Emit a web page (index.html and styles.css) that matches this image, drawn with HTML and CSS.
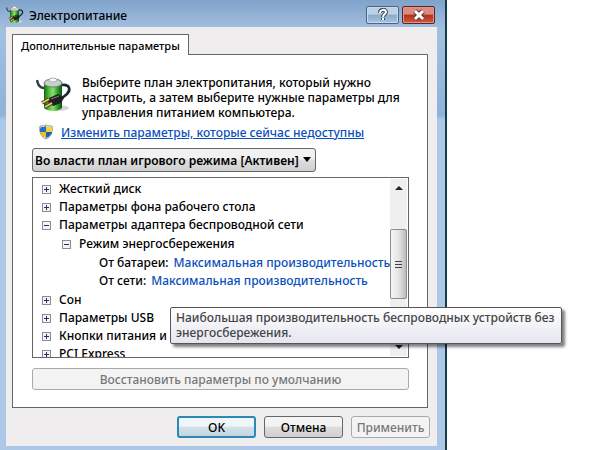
FILE: index.html
```html
<!DOCTYPE html>
<html lang="ru">
<head>
    <meta charset="UTF-8">
    <meta name="viewport" content="width=device-width, initial-scale=1.0">
    <title>Электропитание</title>
    <link rel="stylesheet" href="styles.css">
</head>
<body>
    <svg width="0" height="0" class="defs" aria-hidden="true">
        <defs>
            <linearGradient id="green">
                <stop offset="0" stop-color="#136b12"/>
                <stop offset="0.3" stop-color="#55c63f"/>
                <stop offset="0.5" stop-color="#8be070"/>
                <stop offset="0.75" stop-color="#2f9f27"/>
                <stop offset="1" stop-color="#0b5210"/>
            </linearGradient>
            <symbol id="battery" viewBox="0 0 36 36">
                <ellipse cx="21" cy="31" rx="12" ry="3" fill="#d5d5d5"/>
                <path d="M8 6v24c0 5 18 5 18 0V6z" fill="url(#green)"/>
                <ellipse cx="17" cy="6" rx="9" ry="4" fill="#c9ced0" stroke="#69806b"/>
                <ellipse cx="17" cy="3" rx="4" ry="2" fill="#f5f5f5" stroke="#999" stroke-width=".7"/>
                <path d="M1 3c1 6 3 8 7 8" fill="none" stroke="#343e49" stroke-width="2.4"/>
                <path d="M26 8c8-1 9 5 5 9l-5 4" fill="none" stroke="#1c2530" stroke-width="2.6"/>
                <path d="M13 21l9-4 6 4-3 5-8 3-5-4z" fill="#202020"/>
                <path d="M15 22l8-3" stroke="#777" stroke-width="1.2"/>
                <path d="M13 22l-7 4M16 26l-7 4" stroke="#493713" stroke-width="3.6"/>
                <path d="M13 22l-7 4M16 26l-7 4" stroke="#efc675" stroke-width="1.8"/>
            </symbol>
        </defs>
    </svg>
    <div class="window">
        <header class="titlebar">
            <svg class="title-icon"><use href="#battery"/></svg>
            <h1>Электропитание</h1>
            <button type="button" class="caption" aria-label="Справка">
                <svg width="14" height="14" viewBox="0 0 14 14"><path d="M4 5c0-4 6-4 6-1 0 2-3 2-3 5M7 10v2" fill="none" stroke="#39465a" stroke-width="4"/><path d="M4 5c0-4 6-4 6-1 0 2-3 2-3 5M7 10v2" fill="none" stroke="#fff" stroke-width="2"/></svg>
            </button>
            <button type="button" class="caption close" aria-label="Закрыть">
                <svg width="14" height="12" viewBox="0 0 14 12"><path d="M3 2l8 8M11 2l-8 8" stroke="#5c3535" stroke-width="5"/><path d="M3 2l8 8M11 2l-8 8" stroke="#fff" stroke-width="3"/></svg>
            </button>
        </header>
        <main class="client">
            <button type="button" class="tab">Дополнительные параметры</button>
            <section class="panel">
                <div class="intro">
                    <svg class="intro-icon"><use href="#battery"/></svg>
                    <p>Выберите план электропитания, который нужно настроить, а затем выберите нужные параметры для управления питанием компьютера.</p>
                </div>
                <div class="unlock">
                    <svg width="16" height="16" viewBox="0 0 16 16" aria-hidden="true">
                        <path d="M8 1c2 1 4 1 6 1 1 6-1 11-6 13C3 13 1 8 2 2c2 0 4 0 6-1z" fill="#fff" stroke="#8c949c"/>
                        <path d="M8 2v6H2c-.4-2 0-4 1-5 2 0 3 0 5-1z" fill="#246fc4"/>
                        <path d="M8 2v6h6c.4-2 0-4-1-5-2 0-3 0-5-1z" fill="#f8d03c"/>
                        <path d="M8 8v6C5 13 3 11 2 8z" fill="#f3bd20"/>
                        <path d="M8 8v6c3-1 5-3 6-6z" fill="#1e5eb4"/>
                    </svg>
                    <a href="#">Изменить параметры, которые сейчас недоступны</a>
                </div>
                <div class="plan">
                    <select aria-label="План электропитания">
                        <option>Во власти план игрового режима [Активен]</option>
                    </select>
                </div>
                <div class="tree-box">
                    <ul class="tree">
                        <li><div class="row"><button type="button" class="toggle plus" aria-label="Развернуть"></button>Жесткий диск</div></li>
                        <li><div class="row"><button type="button" class="toggle plus" aria-label="Развернуть"></button>Параметры фона рабочего стола</div></li>
                        <li>
                            <div class="row"><button type="button" class="toggle" aria-label="Свернуть"></button>Параметры адаптера беспроводной сети</div>
                            <ul>
                                <li>
                                    <div class="row"><button type="button" class="toggle" aria-label="Свернуть"></button>Режим энергосбережения</div>
                                    <ul class="values">
                                        <li class="row">От батареи: <a href="#">Максимальная производительность</a></li>
                                        <li class="row">От сети: <a href="#">Максимальная производительность</a></li>
                                    </ul>
                                </li>
                            </ul>
                        </li>
                        <li><div class="row"><button type="button" class="toggle plus" aria-label="Развернуть"></button>Сон</div></li>
                        <li><div class="row"><button type="button" class="toggle plus" aria-label="Развернуть"></button>Параметры USB</div></li>
                        <li><div class="row"><button type="button" class="toggle plus" aria-label="Развернуть"></button>Кнопки питания и</div></li>
                        <li><div class="row"><button type="button" class="toggle plus" aria-label="Развернуть"></button>PCI Express</div></li>
                    </ul>
                    <div class="scrollbar">
                        <button type="button" class="arrow up" aria-label="Вверх"></button>
                        <div class="track"><div class="thumb"></div></div>
                        <button type="button" class="arrow down" aria-label="Вниз"></button>
                    </div>
                    <div class="tooltip" role="tooltip">Наибольшая производительность беспроводных устройств без энергосбережения.</div>
                </div>
                <button type="button" class="btn restore" disabled>Восстановить параметры по умолчанию</button>
            </section>
            <footer class="actions">
                <button type="button" class="btn default">OK</button>
                <button type="button" class="btn">Отмена</button>
                <button type="button" class="btn" disabled>Применить</button>
            </footer>
        </main>
    </div>
</body>
</html>
```
FILE: styles.css
```css
* {
    box-sizing: border-box;
}

body {
    margin: 0;
    background-color: #fff;
    color: #000;
    font-family: "Noto Sans", "Open Sans", sans-serif;
    font-size: 12px;
    font-weight: 500;
    line-height: 15px;
}

button, select {
    font: inherit;
    color: inherit;
    margin: 0;
    padding: 0;
}

ul {
    list-style: none;
    margin: 0;
    padding: 0;
}

a {
    color: #0a50bd;
}

.defs {
    display: block;
    height: 0;
}

.window {
    width: calc(100% - 153px);
    min-height: 100vh;
    padding: 0 8px 4px 6px;
    border-right: 2px solid #123b4c;
    background: linear-gradient(#80a3cb, #a3c0e0 30px, #8fb2d9 115px, #acc8e6 120px, #acc8e6);
    display: flex;
    flex-direction: column;
}

/* title bar */
.titlebar {
    height: 27px;
    display: flex;
    align-items: center;
    gap: 3px;
    padding-right: 2px;
    padding-bottom: 1px;
}

.titlebar h1 {
    flex: 1;
    margin: 0 0 0 2px;
    padding-top: 4px;
    font-size: 12px;
    font-weight: 500;
}

.title-icon {
    width: 18px;
    height: 18px;
    margin-top: 3px;
}

.caption {
    width: 33px;
    height: 18px;
    margin-top: 4px;
    border: 1px solid #4d6480;
    border-radius: 2px;
    background: linear-gradient(#bdd0e6 45%, #8ba9cb 50%, #a9c4e0);
    box-shadow: inset 0 0 0 1px #c8d9ea;
    display: flex;
    align-items: center;
    justify-content: center;
}

.close {
    border-color: #5b2526;
    background: linear-gradient(#d98c7f 45%, #b5301c 50%, #cf5a3c);
    box-shadow: inset 0 0 0 1px #dd9688;
}

/* client area */
.client {
    flex: 1;
    padding: 7px 9px 8px 6px;
    background-color: #efedee;
    display: flex;
    flex-direction: column;
}

.tab {
    align-self: flex-start;
    height: 21px;
    padding: 0 8px;
    border: 1px solid #666;
    border-bottom: 0;
    background-color: #fff;
    font-size: 11px;
    z-index: 1;
    margin-bottom: -1px;
}

.panel {
    padding: 20px 18px 17px 19px;
    border: 1px solid #666;
    background-color: #fff;
    display: flex;
    flex-direction: column;
}

.intro {
    display: flex;
    gap: 10px;
    padding-left: 4px;
}

.intro-icon {
    flex: none;
    width: 36px;
    height: 36px;
    margin-top: 2px;
}

.intro p {
    margin: 0;
}

.unlock {
    display: flex;
    align-items: center;
    gap: 7px;
    height: 16px;
    margin-top: 4px;
    padding-left: 6px;
}

.plan {
    position: relative;
    align-self: flex-start;
    margin-top: 8px;
}

.plan::after {
    content: "";
    position: absolute;
    right: 5px;
    top: 9px;
    border: 4px solid transparent;
    border-top: 5px solid #000;
    border-bottom: 0;
    pointer-events: none;
}

.plan select {
    display: block;
    appearance: none;
    width: 284px;
    height: 24px;
    padding: 0 2px;
    border: 1px solid #666;
    border-radius: 3px;
    background: linear-gradient(#f1f1f1 45%, #dedede 50%, #cfcfcf);
    font-weight: 600;
}

/* settings tree */
.tree-box {
    position: relative;
    margin-top: 5px;
    border: 1px solid #666;
    display: flex;
}

.tree {
    flex: 1;
    height: 179px;
    padding: 1px 0 0 9px;
    overflow: hidden;
}

.tree ul {
    padding: 1px 0 0 20px;
}

.tree .values {
    padding: 1px 0 1px 37px;
}

.row {
    height: 18px;
    display: flex;
    align-items: center;
    gap: 8px;
    white-space: nowrap;
}

.values .row {
    gap: 5px;
}

.row a {
    text-decoration: none;
}

.toggle {
    width: 9px;
    height: 9px;
    margin-top: 2px;
    border: 1px solid #8b8b94;
    background: linear-gradient(#27305f, #27305f) center / 5px 1px no-repeat, #f3f3f8;
}

.plus {
    background: linear-gradient(#27305f, #27305f) center / 5px 1px no-repeat,
        linear-gradient(#27305f, #27305f) center / 1px 5px no-repeat, #f3f3f8;
}

.scrollbar {
    width: 17px;
    margin: 1px 1px 1px 0;
    background-color: #efefef;
    display: flex;
    flex-direction: column;
}

.arrow {
    height: 18px;
    border: 0;
    background: none;
    display: flex;
    align-items: center;
    justify-content: center;
}

.arrow::before {
    content: "";
    border: 4px solid transparent;
}

.up::before {
    border-top: 0;
    border-bottom: 4px solid #222;
}

.down::before {
    border-bottom: 0;
    border-top: 4px solid #222;
}

.track {
    flex: 1;
    padding-top: 32px;
}

.thumb {
    height: 70px;
    border: 1px solid #8d8d8d;
    border-radius: 2px;
    background: linear-gradient(#444, #444) center 31px / 7px 1px no-repeat,
        linear-gradient(#444, #444) center 34px / 7px 1px no-repeat,
        linear-gradient(#444, #444) center 37px / 7px 1px no-repeat,
        linear-gradient(to right, #f6f6f6, #e4e4e4 50%, #bbb);
}

.tooltip {
    position: absolute;
    left: 137px;
    top: 129px;
    width: 392px;
    padding: 2px 5px 3px;
    border: 1px solid #555;
    border-radius: 2px;
    background: linear-gradient(#fff, #e4e5f0);
    box-shadow: 3px 3px 3px rgba(0, 0, 0, 0.5);
    color: #444;
}

/* buttons */
.btn {
    width: 79px;
    height: 22px;
    border: 1px solid #666;
    border-radius: 3px;
    background: linear-gradient(#f3f3f3 45%, #dedede 50%, #cfcfcf);
}

.btn:disabled {
    border-color: #aaa;
    background: #f3f3f3;
    color: #777;
}

.default {
    border: 2px solid #2c89b5;
    background: linear-gradient(#eff6f9 45%, #d3e0e8 50%, #c3d7e1);
}

.restore {
    width: 100%;
    margin-top: 10px;
}

.actions {
    display: flex;
    justify-content: flex-end;
    gap: 8px;
    margin-right: -2px;
    padding-top: 8px;
}
```
